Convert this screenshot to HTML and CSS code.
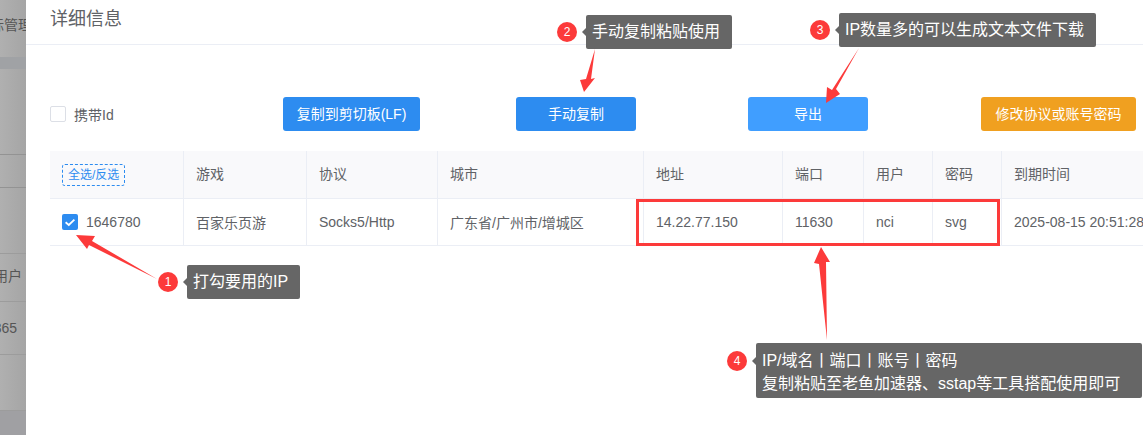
FILE: index.html
```html
<!DOCTYPE html>
<html lang="zh">
<head>
<meta charset="utf-8">
<title>详细信息</title>
<link rel="stylesheet" href="styles.css">
</head>
<body>
<div class="page">
  <aside class="backdrop">
    <div class="bd-top"><span class="bd-text">标管理</span></div>
    <div class="bd-band"></div>
    <div class="bd-row r1"></div>
    <div class="bd-row r2"></div>
    <div class="bd-row r3"></div>
    <div class="bd-row r4"><span class="bd-text">用户</span></div>
    <div class="bd-row r5"><span class="bd-text">365</span></div>
    <div class="bd-row r6"></div>
    <div class="bd-foot"></div>
  </aside>
  <main class="panel">
    <header class="head"><h1>详细信息</h1></header>
    <section class="toolbar">
      <label class="carry"><span class="box"></span>携带Id</label>
      <button class="btn b1">复制到剪切板(LF)</button>
      <button class="btn b2">手动复制</button>
      <button class="btn b3">导出</button>
      <button class="btn b4">修改协议或账号密码</button>
    </section>
    <table class="grid">
      <colgroup>
        <col class="c1"><col class="c2"><col class="c3"><col class="c4"><col class="c5"><col class="c6"><col class="c7"><col class="c8"><col class="c9">
      </colgroup>
      <thead>
        <tr>
          <th class="selcell"><span class="sel">全选/反选</span></th>
          <th>游戏</th><th>协议</th><th>城市</th><th>地址</th><th>端口</th><th>用户</th><th>密码</th><th>到期时间</th>
        </tr>
      </thead>
      <tbody>
        <tr>
          <td><span class="idcell"><span class="check"><svg width="16" height="16" viewBox="0 0 16 16"><path d="M3.6 8.2 6.8 11 12.4 5.6" fill="none" stroke="#fff" stroke-width="1.8"/></svg></span>1646780</span></td>
          <td>百家乐页游</td><td>Socks5/Http</td><td>广东省/广州市/增城区</td><td>14.22.77.150</td><td>11630</td><td>nci</td><td>svg</td><td>2025-08-15 20:51:28</td>
        </tr>
      </tbody>
    </table>
  </main>
</div>

<div class="redbox"></div>
<svg class="arrows" width="1143" height="435" viewBox="0 0 1143 435">
  <path d="M76 235 95 236 92 241 157 279 89 245 87 249Z" fill="#fc3a3a"/>
  <path d="M595 49 591 79 595 78 584 92 580 80 586 79Z" fill="#fc3a3a"/>
  <path d="M859 48 836 89 840 94 826 103 827 87 832 90Z" fill="#fc3a3a"/>
  <path d="M821 247 830 262 826 262 827 340 819 264 814 263Z" fill="#fc3a3a"/>
</svg>

<div class="note n1"><span class="dot">1</span><div class="tip">打勾要用的IP</div></div>
<div class="note n2"><span class="dot">2</span><div class="tip">手动复制粘贴使用</div></div>
<div class="note n3"><span class="dot">3</span><div class="tip">IP数量多的可以生成文本文件下载</div></div>
<div class="note n4"><span class="dot">4</span><div class="tip tall">IP/域名丨端口丨账号丨密码<br>复制粘贴至老鱼加速器、sstap等工具搭配使用即可</div></div>
</body>
</html>
```
FILE: styles.css
```css
* { box-sizing: border-box; }
html, body { margin: 0; height: 435px; width: 1143px; overflow: hidden; background: #fff; }
body { font-family: "Liberation Sans", "Noto Sans CJK SC", sans-serif; font-size: 14px; color: #606266; position: relative; }
.page { display: flex; height: 435px; }

.backdrop { width: 26px; flex: none; background: linear-gradient(90deg, #b0b0b0, #a5a5a5); overflow: hidden; display: flex; flex-direction: column; color: #555; font-size: 14px; line-height: 20px; white-space: nowrap; }
.bd-top { height: 57px; padding-top: 15px; }
.bd-top .bd-text { margin-left: -10px; }
.bd-band { height: 12px; background: #a0a2a5; }
.bd-row { border-bottom: 1px solid #9c9c9c; display: flex; align-items: center; justify-content: flex-end; }
.r1 { height: 86px; border-bottom-color: #939393; }
.r2 { height: 33px; border-bottom-color: #939393; }
.r3 { height: 66px; }
.r4 { height: 48px; padding: 0 4px 3px 0; }
.r5 { height: 53px; padding-right: 9px; }
.r6 { height: 56px; }
.bd-foot { flex: 1; background: #a0a0a3; }
.bd-text { display: block; flex: none; }

.panel { flex: 1; min-width: 0; overflow: hidden; background: #fff; }
.head { height: 45px; border-bottom: 1px solid #ebeef5; padding: 7px 0 0 24px; }
.head h1 { margin: 0; font-size: 18px; line-height: 24px; font-weight: 400; color: #606266; }

.toolbar { display: flex; align-items: center; height: 34px; margin-top: 52px; padding-left: 24px; }
.carry { display: flex; align-items: center; gap: 8px; width: 233px; flex: none; }
.box { width: 16px; height: 16px; border: 1px solid #dcdfe6; border-radius: 2px; background: #fff; }
.btn { height: 34px; border: 0; border-radius: 3px; color: #fff; font: inherit; padding: 0 0 2px; flex: none; text-align: center; }
.b1 { width: 137px; background: #2d8cf0; }
.b2 { width: 120px; margin-left: 96px; background: #2d8cf0; }
.b3 { width: 120px; margin-left: 112px; background: #409eff; }
.b4 { width: 155px; margin-left: 113px; background: #f0a020; }

.grid { margin: 20px 0 0 24px; width: 1100px; table-layout: fixed; border-collapse: separate; border-spacing: 0; }
.c1 { width: 134px; } .c2 { width: 123px; } .c3 { width: 131px; } .c4 { width: 206px; } .c5 { width: 139px; } .c6 { width: 81px; } .c7 { width: 69px; } .c8 { width: 69px; } .c9 { width: 148px; }
.grid th, .grid td { padding: 0 0 0 12px; text-align: left; font-weight: 400; border-right: 1px solid #ebeef5; border-bottom: 1px solid #ebeef5; color: #606266; white-space: nowrap; }
.grid th:last-child, .grid td:last-child { border-right: 0; }
.grid th { height: 48px; background: #f9f9fb; padding-bottom: 3px; }
.grid .selcell { padding-bottom: 0; }
.grid td { height: 47px; background: #fff; }
.sel { display: inline-block; height: 22px; line-height: 20px; padding: 0 5px; border: 1px dashed #2d8cf0; border-radius: 3px; color: #2d8cf0; font-size: 12px; }
.idcell { display: flex; align-items: center; gap: 8px; }
.check { width: 16px; height: 16px; background: #2d8cf0; border-radius: 2px; display: block; }
.check svg { display: block; }

.redbox { position: absolute; left: 636px; top: 199px; width: 364px; height: 47px; border: 3px solid #fc3a3a; }
.arrows { position: absolute; left: 0; top: 0; pointer-events: none; }

.note { position: absolute; display: flex; align-items: center; color: #fff; font-size: 16px; }
.dot { width: 20px; height: 20px; border-radius: 50%; background: #fc3a3a; color: #fff; font-size: 12px; line-height: 20px; text-align: center; flex: none; margin-right: 9px; position: relative; }
.dot::after { content: ""; position: absolute; left: 25px; top: 6px; border: 4px solid transparent; border-right-color: #666; border-left: 0; }
.tip { background: #666; border-radius: 2px; height: 34px; line-height: 34px; padding: 0 12px 0 6px; white-space: nowrap; }
.tip.tall { height: 55px; line-height: 23px; padding: 6px 22px 0 6px; }
.n1 { left: 158px; top: 265px; }
.n2 { left: 557px; top: 15px; }
.n3 { left: 810px; top: 13px; }
.n4 { left: 727px; top: 343px; align-items: flex-start; }
.n4 .dot { margin-top: 8px; }
```
